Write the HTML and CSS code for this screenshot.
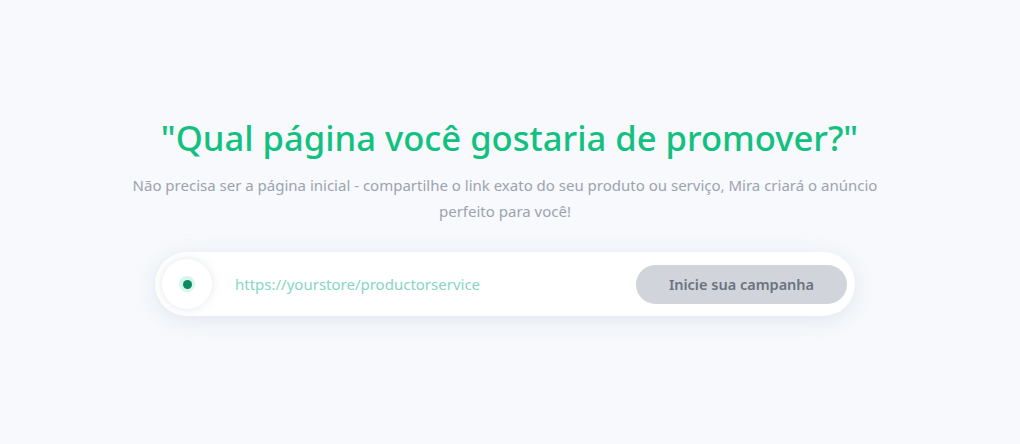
FILE: index.html
```html
<!DOCTYPE html>
<html lang="pt">
<head>
<meta charset="utf-8">
<link rel="stylesheet" href="styles.css">
</head>
<body>
<main class="page">
  <section class="hero">
    <h1 class="title">"Qual página você gostaria de promover?"</h1>
    <p class="subtitle">Não precisa ser a página inicial - compartilhe o link exato do seu produto ou serviço, Mira criará o anúncio perfeito para você!</p>
    <form class="bar">
      <span class="status"><span class="status-ring"><span class="status-dot"></span></span></span>
      <input class="url" type="text" placeholder="https://yourstore/productorservice">
      <button class="cta" type="button">Inicie sua campanha</button>
    </form>
  </section>
</main>
</body>
</html>
```
FILE: styles.css
```css
html, body {
  margin: 0;
  padding: 0;
  background: #f7f9fc;
  font-family: "Noto Sans", "Open Sans", sans-serif;
}
.page {
  width: 1020px;
  height: 444px;
  box-sizing: border-box;
  padding-right: 10px;
  display: flex;
  justify-content: center;
}
.hero {
  display: flex;
  flex-direction: column;
  align-items: center;
  padding-top: 112px;
}
.title {
  margin: 0 0 0 9px;
  font-size: 34.6px;
  font-weight: 500;
  line-height: 52px;
  color: #12c07f;
  letter-spacing: 0;
}
.subtitle {
  margin: 8px 0 0;
  width: 780px;
  text-align: center;
  font-size: 15px;
  line-height: 26px;
  color: #9ca3af;
}
.bar {
  margin-top: 28px;
  width: 700px;
  height: 64px;
  box-sizing: border-box;
  background: #ffffff;
  border-radius: 32px;
  box-shadow: 0 4px 22px rgba(150, 170, 190, 0.22);
  display: flex;
  align-items: center;
  padding: 0 8px 0 7px;
}
.status {
  width: 50px;
  height: 50px;
  border-radius: 50%;
  background: #ffffff;
  box-shadow: 0 0 10px rgba(160, 175, 195, 0.3);
  display: flex;
  align-items: center;
  justify-content: center;
  flex: none;
}
.status-ring {
  width: 16px;
  height: 16px;
  border-radius: 50%;
  background: #d6f5ee;
  display: flex;
  align-items: center;
  justify-content: center;
}
.status-dot {
  width: 9px;
  height: 9px;
  border-radius: 50%;
  background: #0b8a5e;
}
.url {
  flex: 1;
  border: none;
  outline: none;
  background: transparent;
  margin-left: 23px;
  font-family: inherit;
  font-size: 15px;
  color: #4b5563;
  padding: 0;
}
.url::placeholder {
  color: #86d6c2;
}
.cta {
  flex: none;
  width: 211px;
  height: 39px;
  border: none;
  border-radius: 20px;
  background: #d1d5db;
  color: #6b7280;
  font-family: inherit;
  font-size: 14.5px;
  font-weight: 600;
  cursor: pointer;
}
```
